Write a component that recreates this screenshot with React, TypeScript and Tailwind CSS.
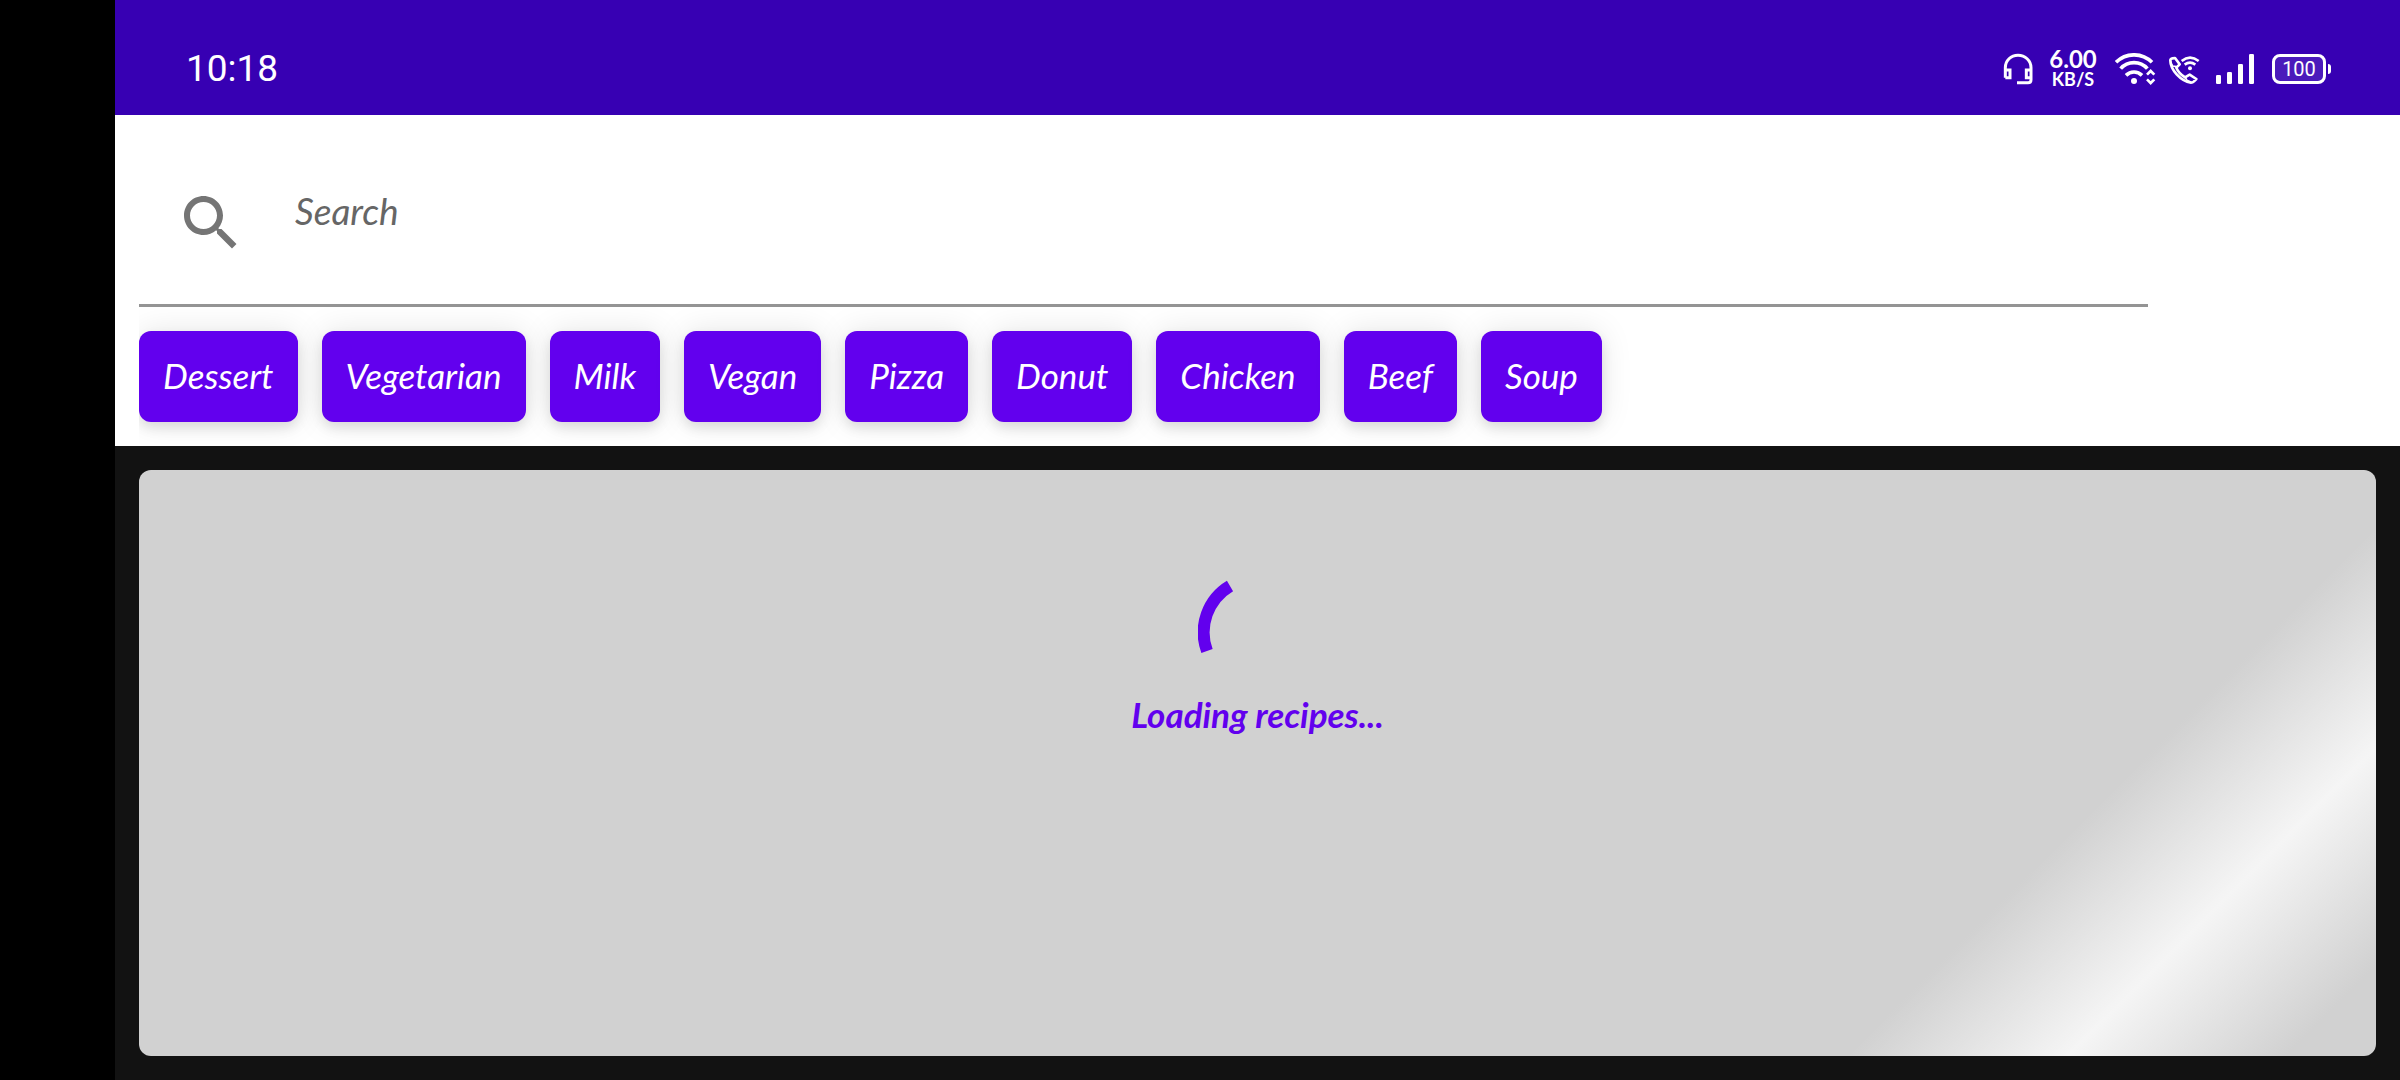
import React from "react";

const categories = [
  "Dessert",
  "Vegetarian",
  "Milk",
  "Vegan",
  "Pizza",
  "Donut",
  "Chicken",
  "Beef",
  "Soup",
];

function HeadsetIcon() {
  return (
    <svg viewBox="66 69 90 96" className="h-8 w-[30px]" fill="none" stroke="white" strokeWidth="9" aria-hidden="true">
      <path d="M73 143V113C73 91 90 76 111 76S150 91 150 113V149Q150 158 141 158H108" />
      <path d="M73 120H87V143H73M150 120H136V143H150" />
    </svg>
  );
}

function WifiIcon() {
  return (
    <svg viewBox="405 69 123 96" className="h-8 w-[41px]" fill="none" stroke="white" strokeWidth="11" aria-hidden="true">
      <path d="M408 97A76 76 0 0 1 516 97M422 116A53 53 0 0 1 502 116M438 136A34 34 0 0 1 486 136" />
      <circle cx="462" cy="153" r="9" fill="white" stroke="none" />
      <path d="M501 134L512 123L523 134M501 148L512 159L523 148" strokeWidth="8" />
    </svg>
  );
}

function CallIcon() {
  return (
    <svg viewBox="567 72 96 93" className="h-[31px] w-8" fill="none" stroke="white" strokeWidth="8" strokeLinejoin="round" aria-hidden="true">
      <path d="M574 91C574 119 604 153 636 158Q641 158 645 154L652 147L632 134L618 142C607 135 597 125 592 113L602 103L588 84L581 85Q574 87 574 91Z" />
      <path d="M574 94L581 108L592 110M619 142L624 151L637 157" strokeWidth="5" />
      <path d="M608 93Q633 73 659 93M617 104Q633 92 649 104" />
      <circle cx="633" cy="115" r="6" fill="white" stroke="none" />
    </svg>
  );
}

function SignalIcon() {
  return (
    <svg viewBox="711 69 114 96" className="h-8 w-[38px]" fill="white" aria-hidden="true">
      <rect x="711" y="135" width="15" height="27" rx="4" />
      <rect x="744" y="126" width="15" height="36" rx="4" />
      <rect x="777" y="102" width="15" height="60" rx="4" />
      <rect x="810" y="72" width="15" height="90" rx="4" />
    </svg>
  );
}

function StatusBar() {
  return (
    <header className="flex h-[115px] items-center justify-between bg-[#3700b3] pt-[23px] pr-[69px] pl-[71px] font-['Roboto',sans-serif] text-white">
      <time className="text-[37px] leading-[46px]">10:18</time>
      <div className="flex items-center">
        <HeadsetIcon />
        <div className="ml-[14px] flex w-[52px] flex-col items-center font-['Lato',sans-serif] font-bold">
          <span className="text-2xl leading-5">6.00</span>
          <span className="text-lg leading-5">KB/S</span>
        </div>
        <div className="ml-4">
          <WifiIcon />
        </div>
        <div className="ml-3">
          <CallIcon />
        </div>
        <div className="ml-4">
          <SignalIcon />
        </div>
        <div className="ml-[18px] flex items-center gap-[2px]">
          <div className="flex h-[30px] w-[54px] items-center justify-center rounded-lg border-3 border-white bg-white/10 text-xl leading-none">
            100
          </div>
          <div className="h-[10px] w-[3px] rounded-r-sm bg-white" />
        </div>
      </div>
    </header>
  );
}

function SearchField() {
  return (
    <div className="w-[90%] px-6 pt-6">
      <label className="flex h-[168px] items-center border-b-3 border-[#949494] pt-[2px] pl-9">
        <svg viewBox="0 0 24 24" className="h-[72px] w-[72px] shrink-0 fill-[#757575]" aria-hidden="true">
          <path d="M15.5 14h-.79l-.28-.27C15.41 12.59 16 11.11 16 9.5 16 5.91 13.09 3 9.5 3S3 5.91 3 9.5 5.91 16 9.5 16c1.61 0 3.09-.59 4.23-1.57l.27.28v.79l5 4.99L20.49 19l-4.99-5zm-6 0C7.01 14 5 11.99 5 9.5S7.01 5 9.5 5 14 7.01 14 9.5 11.99 14 9.5 14z" />
        </svg>
        <input
          type="text"
          aria-label="Search"
          placeholder="Search"
          className="mb-6 ml-12 min-w-0 flex-1 bg-transparent text-[37px] text-[#666666] italic outline-none placeholder:text-[#666666]"
        />
      </label>
    </div>
  );
}

function CategoryChips() {
  return (
    <nav aria-label="Categories" className="ml-6 flex gap-6 overflow-hidden py-6">
      {categories.map((name) => (
        <button
          key={name}
          type="button"
          className="h-[91px] shrink-0 rounded-xl bg-[#6200ee] px-6 pb-[2px] text-[35px] text-white italic shadow-[0_6px_12px_rgba(0,0,0,0.1),0_0_32px_rgba(0,0,0,0.1)]"
        >
          {name}
        </button>
      ))}
    </nav>
  );
}

function LoadingCard() {
  return (
    <main className="flex flex-1 flex-col p-6">
      <section
        role="status"
        className="flex flex-1 flex-col items-center rounded-xl bg-[linear-gradient(315deg,#d1d1d1_64px,#f5f5f5_218px,#d1d1d1_374px)] pt-[102px] text-[#6200ee]"
      >
        <svg viewBox="0 0 120 120" className="h-[120px] w-[120px]" fill="none" stroke="currentColor" strokeWidth="12" aria-hidden="true">
          <path d="M32 14A54 54 0 0 0 9 79" />
        </svg>
        <p className="text-[35px] leading-[44px] font-bold italic">Loading recipes...</p>
      </section>
    </main>
  );
}

export default function App() {
  return (
    <div className="flex min-h-screen flex-col border-l-[115px] border-black bg-[#121212] font-['Lato',sans-serif]">
      <StatusBar />
      <div className="bg-white">
        <SearchField />
        <CategoryChips />
      </div>
      <LoadingCard />
    </div>
  );
}
